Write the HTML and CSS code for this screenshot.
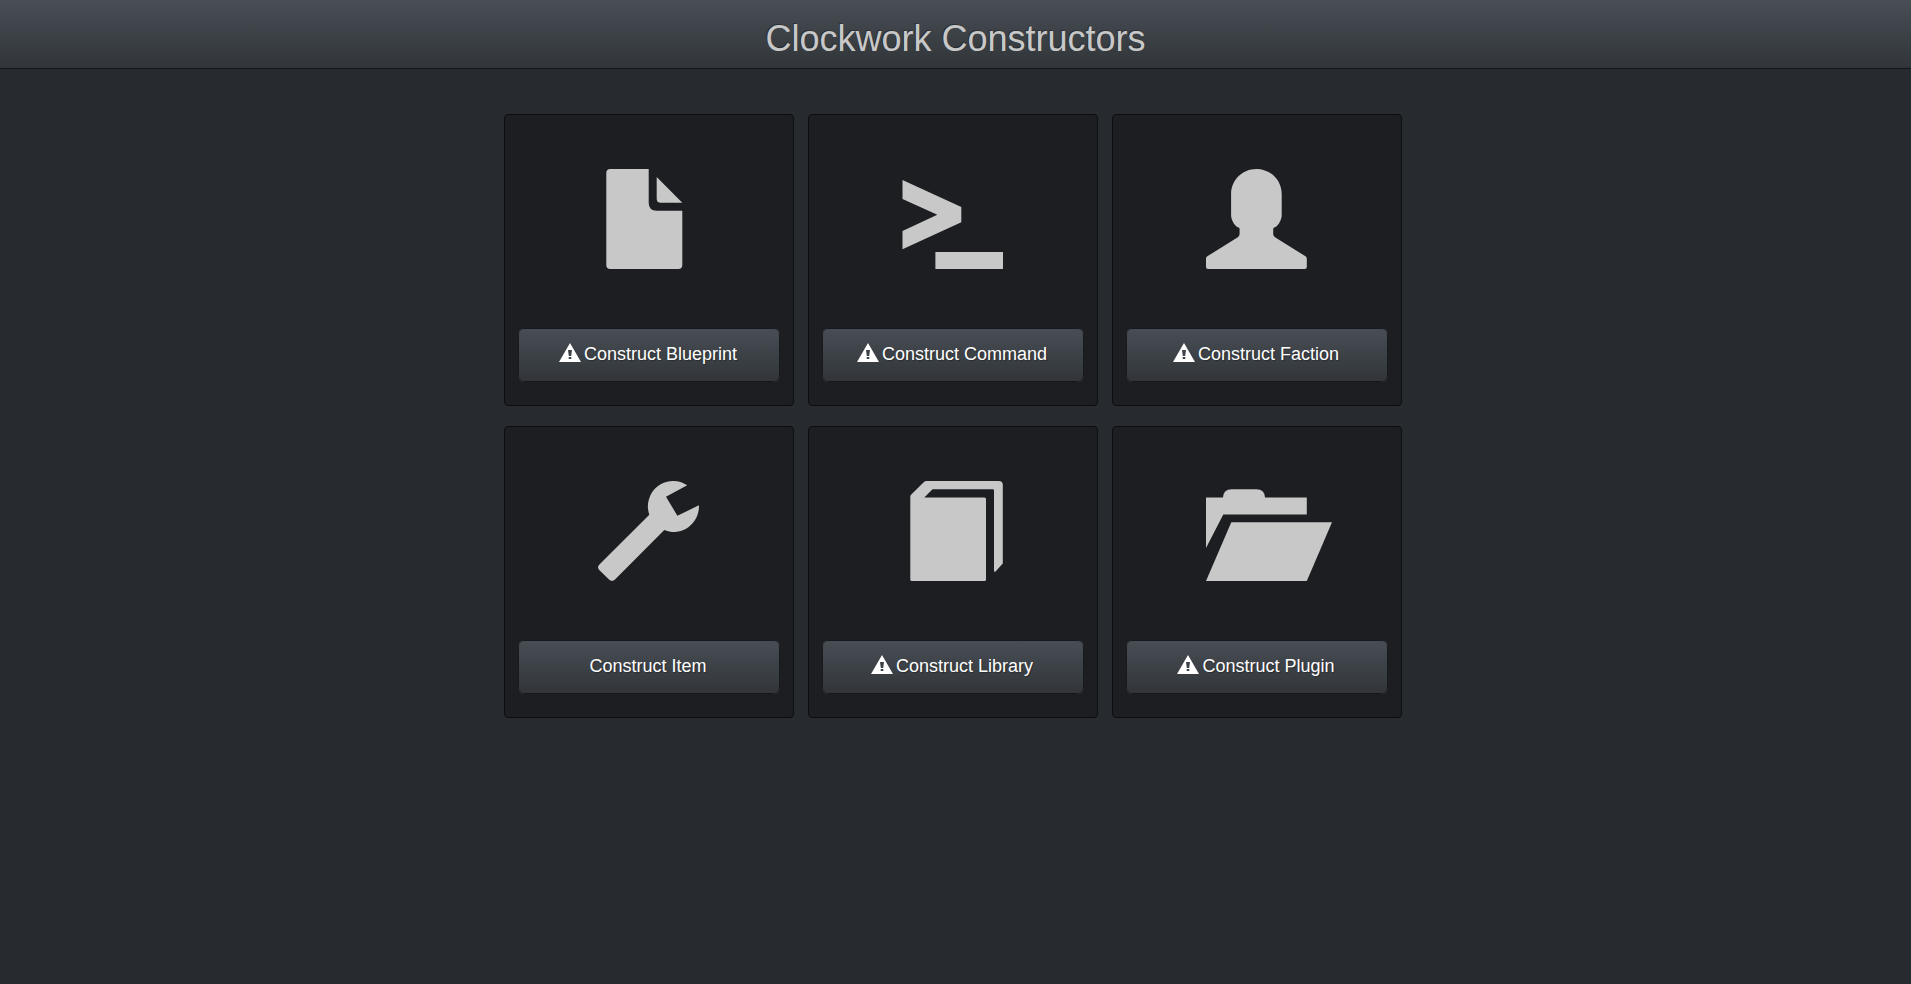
FILE: index.html
```html
<!DOCTYPE html>
<html lang="en">

<head>
    <meta charset="utf-8">
    <title>Clockwork Constructors</title>
    <link rel="stylesheet" href="styles.css">
</head>

<body>
    <!-- Shared warning sign -->
    <svg class="symbols" aria-hidden="true">
        <symbol id="warning" viewBox="0 0 22 19">
            <path fill-rule="evenodd" d="M11 0L22 19H0ZM9 7L9.8 13H12.2L13 7ZM9.7 14V16H12.3V14Z" />
        </symbol>
    </svg>

    <header class="header">
        <h1>Clockwork Constructors</h1>
    </header>

    <main class="constructors">
        <div class="well">
            <svg class="icon" viewBox="0 0 102 100" aria-hidden="true">
                <path d="M12.3 0H50.7V33.7Q50.7 41.7 58.7 41.7H84.3V96Q84.3 100 80.3 100H12.3Q8.3 100 8.3 96V4Q8.3 0 12.3 0Z" />
                <path d="M58.7 8L84.3 33.7H62.7Q58.7 33.7 58.7 29.7Z" />
            </svg>
            <button class="btn"><svg class="warning"><use href="#warning" /></svg>Construct Blueprint</button>
        </div>

        <div class="well">
            <svg class="icon" viewBox="0 0 102 100" aria-hidden="true">
                <path d="M0.5 11L59.3 38V53.3L0.5 80.3V62L35.3 45.7L0.5 30Z" />
                <path d="M33.4 83H101V100H33.4Z" />
            </svg>
            <button class="btn"><svg class="warning"><use href="#warning" /></svg>Construct Command</button>
        </div>

        <div class="well">
            <svg class="icon" viewBox="0 0 102 100" aria-hidden="true">
                <path d="M50.4 0C64.5 0 75.7 11 75.7 25V46C75.7 51 72.5 56.5 69 58.3Q67.2 58.3 67.2 60V65Q67.2 67 69 68.3L99.5 87.3Q100.8 88.2 100.8 89.7V98Q100.8 100 98.8 100H2Q0 100 0 98V89.7Q0 88.2 1.3 87.3L31.8 68.3Q33.6 67 33.6 65V60Q33.6 58.3 31.8 58.3C28.3 56.5 25.1 51 25.1 46V25C25.1 11 36.3 0 50.4 0Z" />
            </svg>
            <button class="btn"><svg class="warning"><use href="#warning" /></svg>Construct Faction</button>
        </div>

        <div class="well">
            <svg class="icon" viewBox="0 0 102 100" aria-hidden="true">
                <path d="M89.2 4.3L68 15.7L79.4 34.8L100.9 24.3A25.3 25.3 0 0 1 66.3 49.1L17 98.5Q14 101.3 11 98.5L1.2 89Q-1.2 86.3 1.2 83.7L51.3 33.7A25.3 25.3 0 0 1 89.2 4.3Z" />
            </svg>
            <button class="btn">Construct Item</button>
        </div>

        <div class="well">
            <svg class="icon" viewBox="0 0 102 100" aria-hidden="true">
                <path d="M24.5 0H96.8Q100.8 0 100.8 4V82.5L93.8 90.2Q92 91.5 92 89.5V9.5Q92 8.3 90.8 8.3H30.5L22.3 16.4H82.5Q84 16.4 84 17.9V98.5Q84 100 82.5 100H9.8Q8.3 100 8.3 98.5V16Q8.3 14.6 9.3 13.6L22 1Q23 0 24.5 0Z" />
            </svg>
            <button class="btn"><svg class="warning"><use href="#warning" /></svg>Construct Library</button>
        </div>

        <div class="well">
            <svg class="icon" viewBox="0 0 102 100" aria-hidden="true">
                <path d="M0 16.4H17Q17.5 8.2 25.5 8.2H50.5Q58.5 8.2 59 16.4H100.8V33.6H17.3L0 67Z" />
                <path d="M25.3 41.2H126L100.8 100H0Z" />
            </svg>
            <button class="btn"><svg class="warning"><use href="#warning" /></svg>Construct Plugin</button>
        </div>
    </main>
</body>

</html>
```
FILE: styles.css
```css
* {
    box-sizing: border-box;
}

body {
    margin: 0;
    background-color: #272b30;
    color: #c8c8c8;
    font-family: Arial, "Liberation Sans", sans-serif;
    font-size: 18px;
}

.symbols {
    display: none;
}

.header {
    padding: 19px 20px 9px;
    background-image: linear-gradient(#484e55, #3a3f44 60%, #313539);
    border-bottom: 1px solid #141619;
    text-align: center;
}

.header h1 {
    margin: 0;
    font-size: 36px;
    font-weight: normal;
    line-height: 40px;
    text-shadow: -1px -1px 0 rgba(0, 0, 0, 0.3);
}

.constructors {
    display: grid;
    grid-template-columns: repeat(3, 1fr);
    gap: 20px 14px;
    max-width: 903px;
    margin: 0 auto;
    padding: 45px 5px 20px 0;
}

.well {
    display: flex;
    flex-direction: column;
    align-items: center;
    padding: 54px 13px 23px;
    background-color: #1c1e22;
    border: 1px solid #0c0d0e;
    border-radius: 4px;
}

.icon {
    width: 102px;
    height: 100px;
    margin-bottom: 59px;
    fill: #c8c8c8;
    /* the open folder is wider than its box */
    overflow: visible;
}

.btn {
    display: flex;
    align-items: center;
    justify-content: center;
    width: 100%;
    padding: 13px 14px 15px 12px;
    background-image: linear-gradient(#484e55, #3a3f44 60%, #313539);
    background-origin: border-box;
    border: 1px solid #17191c;
    border-radius: 6px;
    color: #fff;
    font-family: inherit;
    font-size: 18px;
    line-height: 24px;
    text-shadow: 1px 1px 1px rgba(0, 0, 0, 0.3);
    cursor: pointer;
}

.btn:hover {
    background-image: linear-gradient(#383d42, #2a2e32 60%, #212427);
}

.warning {
    width: 22px;
    height: 19px;
    margin: 0 3px 4px 0;
    fill: currentColor;
}
```
